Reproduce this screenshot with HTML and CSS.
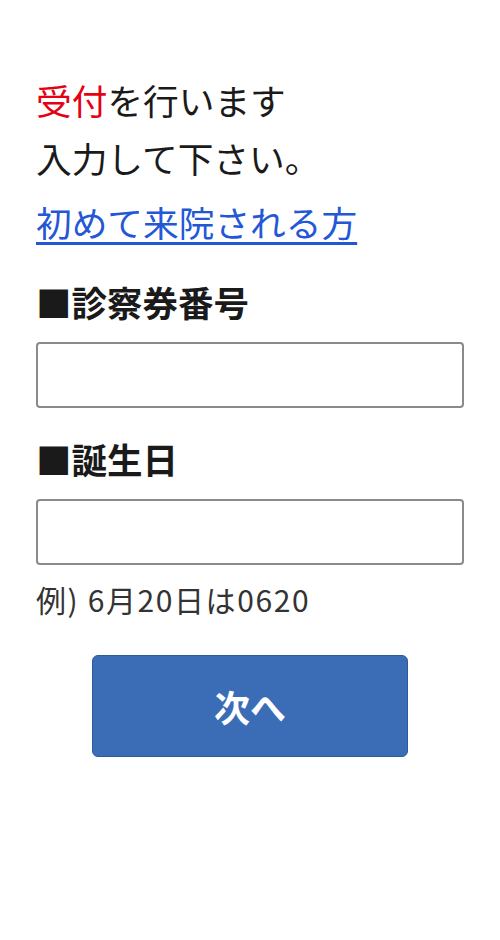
FILE: index.html
```html
<!DOCTYPE html>
<html lang="ja">
<head>
    <meta charset="UTF-8">
    <meta name="viewport" content="width=device-width, initial-scale=1.0">
    <title>受付</title>
    <link rel="stylesheet" href="styles.css">
</head>
<body>
    <div class="container">
        <p class="intro"><span class="accent">受付</span>を行います<br>入力して下さい。</p>
        <p class="first-visit"><a href="#">初めて来院される方</a></p>

        <form>
            <label for="cardNo">■診察券番号</label>
            <input type="text" id="cardNo" class="field">

            <label for="birthday">■誕生日</label>
            <input type="text" id="birthday" class="field">
            <p class="hint">例) 6月20日は0620</p>

            <button type="button" class="next">次へ</button>
        </form>
    </div>
</body>
</html>
```

FILE: styles.css
```css
body {
    font-family: "Noto Sans CJK JP", "Noto Sans", sans-serif;
    margin: 0;
    padding: 0;
    background-color: #fff;
    color: #1a1a1a;
}

.container {
    padding: 71px 36px 0;
}

p {
    margin: 0;
}

.intro {
    font-size: 35.7px;
    line-height: 58px;
}

.accent {
    color: #e60012;
}

.first-visit {
    margin-top: 6px;
    font-size: 35.7px;
    line-height: 58px;
}

.first-visit a {
    color: #2457d6;
    text-decoration-thickness: 3px;
    text-underline-offset: 5px;
}

form {
    display: flex;
    flex-direction: column;
}

label {
    display: block;
    margin-top: 26px;
    font-size: 35.5px;
    font-weight: bold;
    line-height: 50px;
}

.field {
    box-sizing: border-box;
    width: 100%;
    height: 66px;
    margin-top: 15px;
    border: 2px solid #8a8a8a;
    border-radius: 4px;
    font-size: 30px;
    padding: 0 10px;
}

.hint {
    margin-top: 12px;
    font-size: 30px;
    line-height: 44px;
    letter-spacing: 1.6px;
    color: #333;
}

.next {
    align-self: center;
    width: 316px;
    height: 102px;
    margin-top: 34px;
    background-color: #3b6db7;
    border: 1px solid #2d5a9c;
    border-radius: 6px;
    color: #fff;
    font-family: inherit;
    font-size: 36px;
    font-weight: bold;
    cursor: pointer;
}
```
